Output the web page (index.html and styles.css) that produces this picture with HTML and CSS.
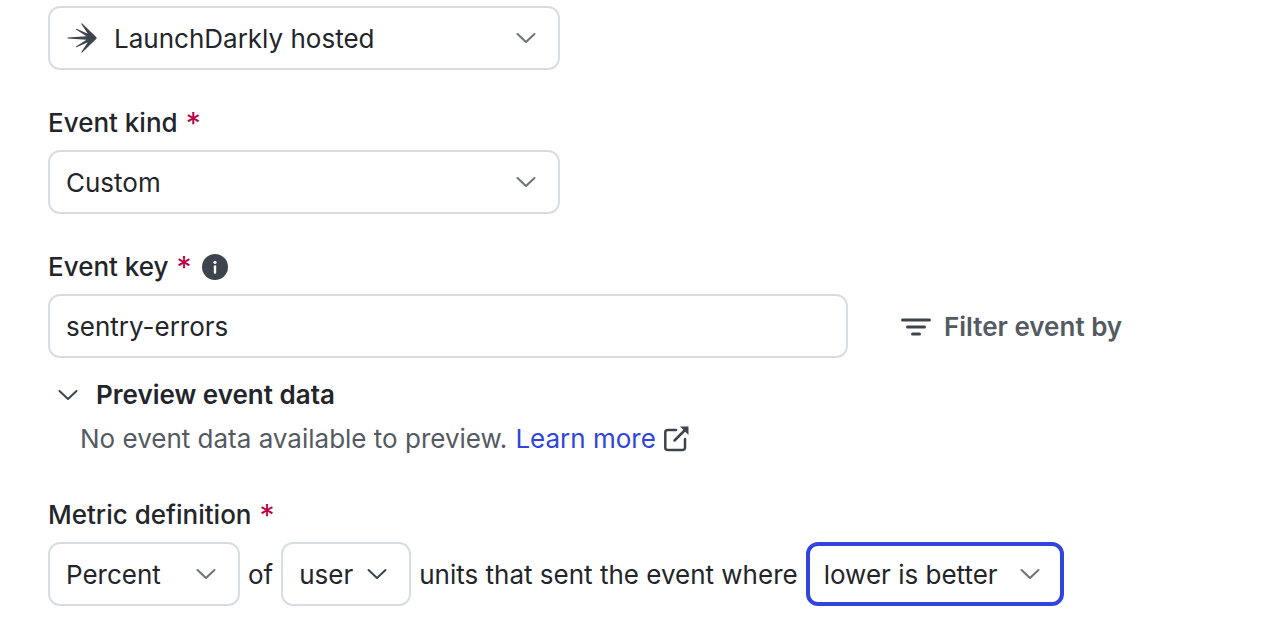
FILE: index.html
```html
<!DOCTYPE html>
<html lang="en">
<head>
    <meta charset="UTF-8">
    <meta name="viewport" content="width=device-width, initial-scale=1.0">
    <title>Create metric</title>
    <link rel="stylesheet" href="styles.css">
</head>
<body>
<form class="metric-form">
    <div class="field">
        <div class="select select-wide">
            <svg class="source-icon" width="30" height="30" viewBox="0 0 30 30" aria-hidden="true">
                <path d="M14.200 .8 Q14.700 0 15.500 .7 L29.400 14.200 Q30 15 29.400 15.800 L15.500 29.300 Q14.600 30 14.200 29.200 L20.800 19.300 L9.500 24.300 Q8.300 24.500 9 23.500 L19.500 16.700 L.8 15.600 Q0 15 .8 14.400 L19.500 13.300 L9 6.500 Q8.300 5.500 9.500 5.700 L20.800 10.700 Z"/>
            </svg>
            <select class="with-icon" aria-label="Event source">
                <option>LaunchDarkly hosted</option>
            </select>
            <svg class="chevron" width="20" height="12" viewBox="0 0 20 12" aria-hidden="true"><path d="M1.500 2 10 10l8.500-8"/></svg>
        </div>
    </div>

    <div class="field">
        <div class="label-row">
            <label for="kind">Event kind</label>
            <span class="required">*</span>
        </div>
        <div class="select select-wide">
            <select id="kind">
                <option>Custom</option>
            </select>
            <svg class="chevron" width="20" height="12" viewBox="0 0 20 12" aria-hidden="true"><path d="M1.500 2 10 10l8.500-8"/></svg>
        </div>
    </div>

    <div class="field">
        <div class="label-row">
            <label for="key">Event key</label>
            <span class="required">*</span>
            <svg class="info" width="26" height="26" viewBox="0 0 26 26" aria-hidden="true">
                <circle cx="13" cy="13" r="13"/>
                <circle class="info-mark" cx="13" cy="8.300" r="1.600"/>
                <rect class="info-mark" x="11.800" y="11.300" width="2.400" height="8.500" rx="1"/>
            </svg>
        </div>
        <div class="key-row">
            <input class="key-input" id="key" type="text" value="sentry-errors">
            <button class="filter" type="button">
                <svg width="30" height="18" viewBox="0 0 30 18" aria-hidden="true"><path d="M1.500 2h27M6.500 9h17M11.500 16h7"/></svg>
                Filter event by
            </button>
        </div>
        <details class="preview" open>
            <summary>
                <svg class="toggle" width="20" height="12" viewBox="0 0 20 12" aria-hidden="true"><path d="M1.500 2 10 10l8.500-8"/></svg>
                Preview event data
            </summary>
            <p>
                No event data available to preview.
                <a href="#">Learn more</a>
                <svg class="external" width="26" height="26" viewBox="0 0 26 26" aria-hidden="true">
                    <path d="M12 4H3.800A2.500 2.500 0 0 0 1.300 6.500v15A2.500 2.500 0 0 0 3.800 24H18.500a2.500 2.500 0 0 0 2.500-2.500V13M10.500 14.500 22.500 2.500"/>
                    <path class="external-head" d="M16 .5h8.500V9l-3-3-2.500-2.500z"/>
                </svg>
            </p>
        </details>
    </div>

    <div class="field">
        <div class="label-row">
            <label for="measure">Metric definition</label>
            <span class="required">*</span>
        </div>
        <div class="definition">
            <div class="select select-measure">
                <select id="measure">
                    <option>Percent</option>
                </select>
                <svg class="chevron" width="20" height="12" viewBox="0 0 20 12" aria-hidden="true"><path d="M1.500 2 10 10l8.500-8"/></svg>
            </div>
            <span>of</span>
            <div class="select select-unit">
                <select aria-label="Unit">
                    <option>user</option>
                </select>
                <svg class="chevron chevron-dark" width="20" height="12" viewBox="0 0 20 12" aria-hidden="true"><path d="M1.500 2 10 10l8.500-8"/></svg>
            </div>
            <span>units that sent the event where</span>
            <div class="select select-direction">
                <select class="active" aria-label="Success direction">
                    <option>lower is better</option>
                </select>
                <svg class="chevron" width="20" height="12" viewBox="0 0 20 12" aria-hidden="true"><path d="M1.500 2 10 10l8.500-8"/></svg>
            </div>
        </div>
    </div>
</form>
</body>
</html>
```

FILE: styles.css
```css
* {
    box-sizing: border-box;
}

body {
    margin: 0;
    background-color: #fff;
    color: #23252a;
    font-family: Inter, sans-serif;
    font-size: 26px;
    line-height: 34px;
}

.metric-form {
    display: flex;
    flex-direction: column;
    gap: 36px;
    padding: 6px 48px 30px;
}

.label-row {
    display: flex;
    align-items: center;
    gap: 8px;
    margin-bottom: 10px;
    font-weight: 500;
}

.required {
    color: #b80048;
    font-size: 30px;
    font-weight: 400;
}

.info {
    fill: #3d444d;
    margin-left: 2px;
}

.info-mark {
    fill: #fff;
}

select,
.key-input {
    width: 100%;
    height: 64px;
    padding: 0 16px;
    border: 2px solid #d8dde3;
    border-radius: 12px;
    background-color: #fff;
    color: inherit;
    font: inherit;
}

select {
    appearance: none;
    padding-top: 2px;
}

.select {
    position: relative;
    display: flex;
}

.select-wide {
    max-width: 512px;
}

.select-measure {
    width: 192px;
}

.select-unit {
    width: 130px;
}

.select-direction {
    width: 258px;
}

select.with-icon {
    padding-left: 64px;
}

select.active {
    padding: 2px 14px 0;
    border: 4px solid #3144dc;
}

.source-icon {
    position: absolute;
    left: 19px;
    top: 17px;
    fill: #3d444d;
    pointer-events: none;
}

.chevron {
    position: absolute;
    right: 24px;
    top: 26px;
    pointer-events: none;
}

.chevron,
.toggle {
    fill: none;
    stroke: #6c727a;
    stroke-width: 2;
    stroke-linecap: round;
    stroke-linejoin: round;
}

.chevron-dark,
.toggle {
    stroke: #3d444d;
}

.key-row {
    display: flex;
    align-items: center;
    gap: 53px;
}

.key-input {
    max-width: 800px;
}

.filter {
    display: flex;
    align-items: center;
    gap: 13px;
    flex-shrink: 0;
    padding: 2px 0 0;
    border: none;
    background: none;
    color: #545a62;
    font: inherit;
    font-weight: 600;
    cursor: pointer;
}

.filter path {
    fill: none;
    stroke: #3d444d;
    stroke-width: 3;
    stroke-linecap: round;
}

.preview {
    padding: 15px 0 1px;
    line-height: 44px;
}

.preview summary {
    display: flex;
    align-items: center;
    gap: 18px;
    padding-left: 10px;
    font-weight: 600;
    cursor: pointer;
}

.preview p {
    display: flex;
    align-items: center;
    gap: 8px;
    margin: 0;
    padding-left: 32px;
    color: #545a62;
}

.preview a {
    color: #3144dc;
    text-decoration: none;
}

.external {
    fill: none;
    stroke: #3d444d;
    stroke-width: 2.5;
    stroke-linecap: round;
}

.external .external-head {
    fill: #3d444d;
    stroke: none;
}

.definition {
    display: flex;
    align-items: center;
    gap: 8px;
}

.definition span {
    padding-top: 2px;
}
```
